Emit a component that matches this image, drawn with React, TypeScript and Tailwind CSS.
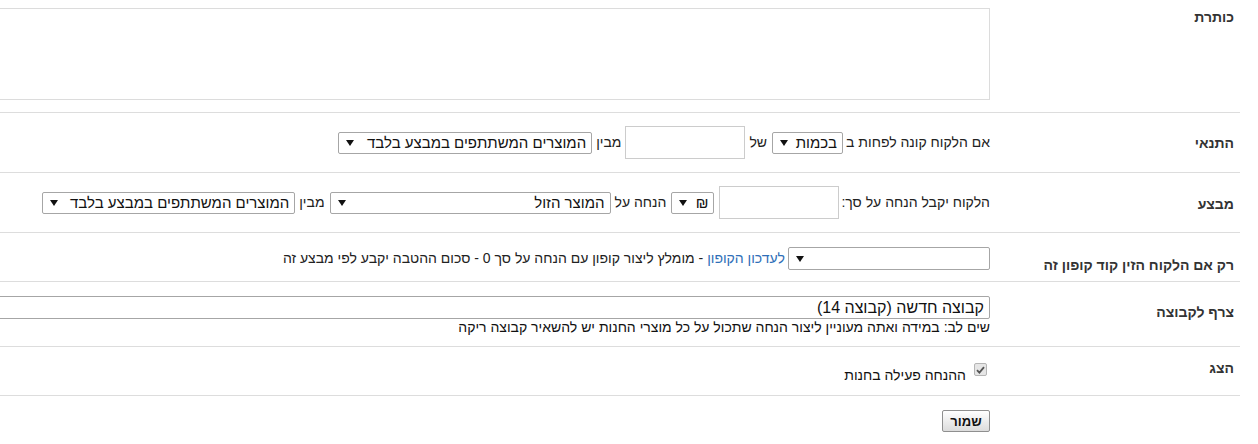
import React from "react";

function Arrow() {
  return (
    <svg width="8" height="6" viewBox="0 0 8 6" className="shrink-0">
      <polygon points="0,0 8,0 4,6" fill="#111" />
    </svg>
  );
}

function FakeSelect({ text, w, extra = "" }: { text: string; w: string; extra?: string }) {
  return (
    <div
      className={`flex items-center justify-between shrink-0 h-[22px] border border-[#a6a6a6] rounded-[2px] bg-white pr-[5px] pl-[7px] text-[15px] text-[#111] leading-none ${w} ${extra}`}
    >
      <span className="whitespace-nowrap">{text}</span>
      <Arrow />
    </div>
  );
}

function Label({ children, pt }: { children: React.ReactNode; pt: string }) {
  return (
    <div className={`w-[250px] shrink-0 pr-[6px] font-bold text-[14px] leading-[16px] text-[#333] ${pt}`}>
      {children}
    </div>
  );
}

export default function App() {
  return (
    <div
      dir="rtl"
      className="w-[1258px] h-[444px] overflow-hidden bg-white text-[14px] text-[#222] font-['Liberation_Sans',Arial,sans-serif]"
    >
      <div className="mr-[18px] w-[1250px]">
        {/* Row 1 */}
        <div className="flex h-[113px] border-b border-[#dddddd]">
          <Label pt="pt-[9px]">כותרת</Label>
          <div className="flex-1 pt-[8px]">
            <div className="w-[1000px] h-[92px] border border-[#dcdcdc] bg-white" />
          </div>
        </div>

        {/* Row 2 */}
        <div className="flex h-[60px] border-b border-[#dddddd] items-center">
          <Label pt="pt-0">התנאי</Label>
          <div className="flex-1 flex items-center whitespace-nowrap">
            <span className="ml-[3px]">אם הלקוח קונה לפחות ב</span>
            <FakeSelect text="בכמות" w="w-[71px]" />
            <span className="mr-[5px] ml-[4px]">של</span>
            <div className="w-[120px] h-[33px] border border-[#cccccc] bg-white shrink-0" />
            <span className="mr-[4px] ml-[4px]">מבין</span>
            <FakeSelect text="המוצרים המשתתפים במבצע בלבד" w="w-[254px]" />
          </div>
        </div>

        {/* Row 3 */}
        <div className="flex h-[60px] border-b border-[#dddddd] items-center">
          <Label pt="pt-[2px]">מבצע</Label>
          <div className="flex-1 flex items-center whitespace-nowrap">
            <span className="ml-[2px]">הלקוח יקבל הנחה על סך:</span>
            <div className="w-[120px] h-[33px] border border-[#cccccc] bg-white shrink-0" />
            <FakeSelect text="₪" w="w-[43px]" extra="mr-[5px]" />
            <span className="mr-[5px] ml-[4px]">הנחה על</span>
            <FakeSelect text="המוצר הזול" w="w-[281px]" />
            <span className="mr-[5px] ml-[4px]">מבין</span>
            <FakeSelect text="המוצרים המשתתפים במבצע בלבד" w="w-[253px]" />
          </div>
        </div>

        {/* Row 4 */}
        <div className="flex h-[49px] border-b border-[#dddddd] items-start">
          <Label pt="pt-[24px]">רק אם הלקוח הזין קוד קופון זה</Label>
          <div className="flex-1 flex items-center whitespace-nowrap pt-[14px]">
            <FakeSelect text="" w="w-[202px]" extra="h-[23px]" />
            <span className="mr-[3px]">
              <span className="text-[#2f6fb8]">לעדכון הקופון</span>
              <span> - מומלץ ליצור קופון עם הנחה על סך 0 - סכום ההטבה יקבע לפי מבצע זה</span>
            </span>
          </div>
        </div>

        {/* Row 5 */}
        <div className="flex h-[65px] border-b border-[#dddddd] items-start">
          <Label pt="pt-[22px]">צרף לקבוצה</Label>
          <div className="flex-1 pt-[14px]">
            <div className="w-[1000px] h-[23px] border border-[#a6a6a6] rounded-[2px] bg-white flex items-center pr-[5px] text-[16px] text-[#111] leading-none">
              קבוצה חדשה (קבוצה 14)
            </div>
            <div className="text-[14px] leading-[16px] text-[#111] mt-[0px]">
              שים לב: במידה ואתה מעוניין ליצור הנחה שתכול על כל מוצרי החנות יש להשאיר קבוצה ריקה
            </div>
          </div>
        </div>

        {/* Row 6 */}
        <div className="flex h-[49px] border-b border-[#dddddd] items-start">
          <Label pt="pt-[13px]">הצג</Label>
          <div className="flex-1 flex items-start pt-[16px] pr-[3px]">
            <div className="w-[13px] h-[13px] border border-[#b5b5b5] rounded-[2px] bg-[#e6e6e6] flex items-center justify-center shrink-0">
              <svg width="9" height="8" viewBox="0 0 9 8">
                <path d="M1 4.2 L3.4 6.6 L8 1.2" stroke="#555" strokeWidth="1.8" fill="none" />
              </svg>
            </div>
            <span className="mr-[8px] mt-[4px] leading-[16px] text-[#111]">ההנחה פעילה בחנות</span>
          </div>
        </div>

        {/* Row 7 */}
        <div className="flex h-[48px] items-start">
          <div className="w-[250px] shrink-0" />
          <div className="flex-1 pt-[14px]">
            <button className="w-[48px] h-[22px] border border-[#8f8f8f] rounded-[2px] bg-gradient-to-b from-[#ffffff] to-[#dcdcdc] text-[13px] font-bold text-[#111] leading-none font-['Liberation_Sans',Arial,sans-serif]">
              שמור
            </button>
          </div>
        </div>
      </div>
    </div>
  );
}
